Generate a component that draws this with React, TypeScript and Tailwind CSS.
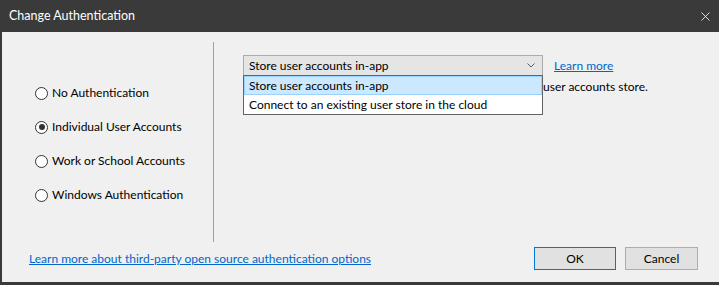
import { X } from "lucide-react";

const options = [
  { label: "No Authentication", checked: false },
  { label: "Individual User Accounts", checked: true },
  { label: "Work or School Accounts", checked: false },
  { label: "Windows Authentication", checked: false },
];

const Radio = ({ checked }: { checked: boolean }) => (
  <span className="flex h-[13px] w-[13px] items-center justify-center rounded-full border border-[#333333] bg-white">
    {checked && <span className="h-[6px] w-[6px] rounded-full bg-[#333333]" />}
  </span>
);

const App = () => {
  return (
    <div className="flex h-[285px] w-[719px] flex-col bg-[#3a3a3a] font-['Lato','Liberation_Sans',sans-serif] text-[12px] text-black">
      {/* title bar */}
      <div className="flex h-[32px] shrink-0 items-center justify-between pl-[9px] pr-[6px] text-white">
        <span className="text-[12.5px]">Change Authentication</span>
        <X size={15} strokeWidth={1.3} className="text-white" />
      </div>

      {/* dialog body */}
      <div className="ml-[2px] flex flex-1 flex-col bg-[#f0f0f0]">
        <div className="flex h-[206px]">
          <div className="mt-[10px] -mb-[4px] flex w-[212px] flex-col gap-[18px] border-r border-[#a0a0a0] pl-[33px] pt-[43px]">
            {options.map((o) => (
              <label key={o.label} className="flex h-[16px] items-center gap-[4px]">
                <Radio checked={o.checked} />
                <span>{o.label}</span>
              </label>
            ))}
          </div>

          <div className="relative flex-1 pl-[29px] pt-[23px]">
            <div className="flex items-center gap-[11px]">
              <div className="flex h-[21px] w-[300px] items-center justify-between border border-[#acacac] bg-[#e5e5e5] pl-[5px] pr-[7px]">
                <span>Store user accounts in-app</span>
                <svg width="8" height="5" viewBox="0 0 8 5" className="text-[#606060]">
                  <path d="M0.5 0.5 L4 4 L7.5 0.5" fill="none" stroke="currentColor" strokeWidth="1" />
                </svg>
              </div>
              <a className="text-[#0066cc] underline">Learn more</a>
            </div>
            <div className="pl-[300px] pt-[2px] leading-[18px]">user accounts store.</div>

            {/* open list */}
            <div className="absolute left-[29px] top-[43px] w-[300px] border border-[#646464] bg-white">
              <div className="flex h-[19px] items-center border border-[#99d1ff] bg-[#cce8ff] pl-[4px]">
                Store user accounts in-app
              </div>
              <div className="flex h-[19px] items-center pl-[5px]">
                Connect to an existing user store in the cloud
              </div>
            </div>
          </div>
        </div>

        <div className="flex flex-1 items-center justify-between pl-[27px] pr-[21px] pb-[3px]">
          <a className="text-[#0066cc] underline">
            Learn more about third-party open source authentication options
          </a>
          <div className="flex gap-[9px]">
            <button className="h-[23px] w-[82px] border border-[#0078d7] bg-[#e1e1e1]">OK</button>
            <button className="h-[23px] w-[73px] border border-[#adadad] bg-[#e1e1e1]">Cancel</button>
          </div>
        </div>
        <div className="h-[3px] bg-[#3a3a3a]" />
      </div>
    </div>
  );
};

export default App;
